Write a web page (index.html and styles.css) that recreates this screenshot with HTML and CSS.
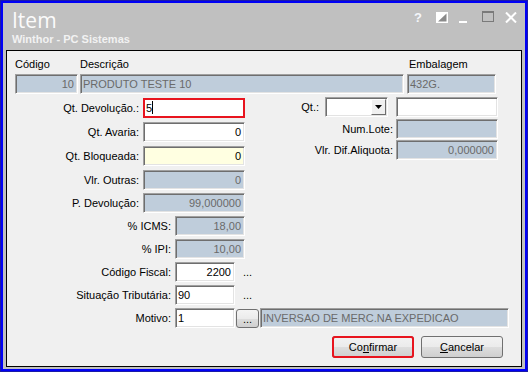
FILE: index.html
```html
<!DOCTYPE html>
<html lang="pt">
<head>
    <meta charset="UTF-8">
    <title>Item - Winthor</title>
    <link rel="stylesheet" href="styles.css">
</head>
<body>
    <div class="window">
        <div class="titlebar">
            <div class="title">
                <div class="title-main">Item</div>
                <div class="title-sub">Winthor - PC Sistemas</div>
            </div>
            <div class="ctrls">
                <span class="ctrl-help">?</span>
                <svg class="ctrl-skin" width="12" height="11" viewBox="0 0 12 11">
                    <rect x="0" y="0" width="12" height="11" fill="#ffffff"/>
                    <polygon points="10.5,1.5 10.5,9.5 2,9.5" fill="#8a8a8a"/>
                </svg>
                <svg class="ctrl-min" width="8" height="11" viewBox="0 0 8 11">
                    <rect x="0" y="9" width="8" height="2" fill="#ffffff"/>
                </svg>
                <svg class="ctrl-max" width="12" height="11" viewBox="0 0 12 11">
                    <rect x="0.5" y="0.5" width="11" height="10" fill="none" stroke="#7a7a7a"/>
                    <rect x="0" y="0" width="12" height="2" fill="#7a7a7a"/>
                </svg>
                <svg class="ctrl-close" width="12" height="11" viewBox="0 0 12 11">
                    <path d="M1 0.5 L11 10.5 M11 0.5 L1 10.5" stroke="#ffffff" stroke-width="2"/>
                </svg>
            </div>
        </div>

        <div class="panel">
            <!-- cabeçalho do produto -->
            <div class="top-grid">
                <span class="cap">Código</span>
                <span class="cap">Descrição</span>
                <span class="cap cap-emb">Embalagem</span>
                <div class="fld ro num">10</div>
                <div class="fld ro">PRODUTO TESTE 10</div>
                <div class="fld ro">432G.</div>
            </div>

            <div class="block-a">
                <div class="col-left">
                    <div class="row">
                        <label class="lbl lbl-a">Qt. Devolução.:</label>
                        <div class="fld w-a hl">5<span class="caret"></span></div>
                    </div>
                    <div class="row">
                        <label class="lbl lbl-a">Qt. Avaria:</label>
                        <div class="fld w-a num">0</div>
                    </div>
                    <div class="row">
                        <label class="lbl lbl-a">Qt. Bloqueada:</label>
                        <div class="fld w-a num yel">0</div>
                    </div>
                </div>
                <div class="col-right">
                    <div class="row">
                        <label class="lbl">Qt.:</label>
                        <div class="combo">
                            <span class="drop">
                                <svg width="7" height="4" viewBox="0 0 7 4"><polygon points="0,0 7,0 3.5,4" fill="#000"/></svg>
                            </span>
                        </div>
                        <div class="fld w-a"></div>
                    </div>
                    <div class="row row-lote">
                        <label class="lbl">Num.Lote:</label>
                        <div class="fld w-a ro"></div>
                    </div>
                    <div class="row row-dif">
                        <label class="lbl">Vlr. Dif.Aliquota:</label>
                        <div class="fld w-a ro num">0,000000</div>
                    </div>
                </div>
            </div>

            <div class="col-rest">
                <div class="row">
                    <label class="lbl lbl-a">Vlr. Outras:</label>
                    <div class="fld w-a ro num">0</div>
                </div>
                <div class="row">
                    <label class="lbl lbl-a">P. Devolução:</label>
                    <div class="fld w-a ro num">99,000000</div>
                </div>
                <div class="row">
                    <label class="lbl lbl-b">% ICMS:</label>
                    <div class="fld w-b ro num">18,00</div>
                </div>
                <div class="row">
                    <label class="lbl lbl-b">% IPI:</label>
                    <div class="fld w-b ro num">10,00</div>
                </div>
                <div class="row">
                    <label class="lbl lbl-b">Código Fiscal:</label>
                    <div class="fld w-c num">2200</div>
                    <span class="ell">...</span>
                </div>
                <div class="row">
                    <label class="lbl lbl-b">Situação Tributária:</label>
                    <div class="fld w-c">90</div>
                    <span class="ell">...</span>
                </div>
                <div class="row">
                    <label class="lbl lbl-b">Motivo:</label>
                    <div class="fld w-c">1</div>
                    <button class="dots-btn">...</button>
                    <div class="fld ro w-mot">INVERSAO DE MERC.NA EXPEDICAO</div>
                </div>
            </div>

            <div class="actions">
                <button class="btn btn-hl">Co<u>n</u>firmar</button>
                <button class="btn"><u>C</u>ancelar</button>
            </div>
        </div>
    </div>
</body>
</html>
```

FILE: styles.css
```css
* {
    margin: 0;
    padding: 0;
    box-sizing: border-box;
}

body {
    font-family: "Liberation Sans", Arial, sans-serif;
    font-size: 11px;
    color: #000;
    background: #fff;
}

.window {
    width: 528px;
    height: 372px;
    border: 3px solid #0000f6;
    outline: 1px solid #1a1aa8;
    outline-offset: -1px;
    background: #c0c0c0;
}

/* barra de titulo */
.titlebar {
    height: 47px;
    display: flex;
    justify-content: space-between;
}

.title {
    padding: 5px 0 0 9px;
    color: #fbfbfb;
}

.title-main {
    font-family: "Open Sans", sans-serif;
    font-size: 21px;
    line-height: 24px;
}

.title-sub {
    margin-top: 1px;
    font-weight: bold;
    font-size: 11px;
    line-height: 13px;
    color: #f2f2f2;
}

.ctrls {
    display: flex;
    align-items: flex-start;
    padding: 8px 8px 0 0;
}

.ctrl-help {
    width: 8px;
    font-weight: bold;
    font-size: 13px;
    line-height: 13px;
    color: #f4f6fa;
}

.ctrl-skin {
    margin: 1px 0 0 14px;
}

.ctrl-min {
    margin: 1px 0 0 11px;
}

.ctrl-max {
    margin: 0 0 0 15px;
}

.ctrl-close {
    margin: 1px 0 0 11px;
}

/* area do formulario */
.panel {
    margin: 0 3px 2px 3px;
    height: 317px;
    border: 1px solid #000;
    background: #f0f0f0;
    padding-top: 7px;
}

.top-grid {
    display: grid;
    grid-template-columns: 63px 324px 90px;
    grid-template-rows: 13px 20px;
    column-gap: 2px;
    row-gap: 3px;
    padding-left: 8px;
}

.top-grid > :nth-child(3n) {
    margin-left: 1px;
}

.cap {
    line-height: 13px;
}

.cap-emb {
    padding-left: 2px;
}

.fld {
    height: 20px;
    border: 1px solid;
    border-color: #a0a0a0 #ffffff #ffffff #a0a0a0;
    box-shadow: inset 1px 1px 0 #6e6e6e, inset -1px -1px 0 #e3e3e3;
    background: #fff;
    padding: 0 3px 0 2px;
    line-height: 18px;
    white-space: nowrap;
    overflow: hidden;
}

.ro {
    background: #bfcddb;
    color: #6a6a6a;
}

.yel {
    background: #ffffe1;
}

.num {
    text-align: right;
}

.hl {
    border: 2px solid #e8141e;
    box-shadow: none;
    line-height: 16px;
    padding-left: 1px;
}

.caret {
    display: inline-block;
    width: 1px;
    height: 13px;
    background: #000;
    vertical-align: -2px;
}

.w-a {
    width: 102px;
}

.w-b {
    width: 70px;
}

.w-c {
    width: 60px;
}

.w-mot {
    width: 249px;
    margin-left: 1px;
}

.row {
    display: flex;
    align-items: center;
    height: 20px;
}

.lbl {
    text-align: right;
    white-space: nowrap;
    margin-right: 4px;
}

.lbl-a {
    width: 132px;
}

.lbl-b {
    width: 164px;
}

.block-a {
    margin-top: 3px;
    display: flex;
    justify-content: space-between;
    padding-right: 23px;
}

.col-left {
    padding-top: 1px;
    display: flex;
    flex-direction: column;
    gap: 4px;
}

.col-right {
    display: flex;
    flex-direction: column;
    align-items: flex-end;
}

.col-right .lbl {
    margin-right: 3px;
}

.col-right .row:first-child .lbl {
    margin-right: 6px;
}

.row-lote {
    margin-top: 2px;
}

.row-dif {
    margin-top: 1px;
}

.combo {
    width: 63px;
    height: 20px;
    margin-right: 8px;
    border: 1px solid;
    border-color: #a0a0a0 #ffffff #ffffff #a0a0a0;
    box-shadow: inset 1px 1px 0 #6e6e6e, inset -1px -1px 0 #e3e3e3;
    background: #fff;
    display: flex;
    justify-content: flex-end;
    align-items: center;
    padding-right: 1px;
}

.drop {
    width: 15px;
    height: 16px;
    border: 1px solid;
    border-color: #ffffff #6e6e6e #6e6e6e #ffffff;
    background: #f0f0f0;
    display: flex;
    justify-content: center;
    align-items: center;
}

.col-rest {
    margin-top: 4px;
    display: flex;
    flex-direction: column;
    gap: 3px;
}

.ell {
    margin-left: 8px;
    line-height: 14px;
}

.dots-btn {
    width: 23px;
    height: 19px;
    margin-left: 1px;
    border: 1px solid #707070;
    border-radius: 3px;
    background: linear-gradient(#f4f4f4, #ebebeb 50%, #dddddd 51%, #d0d0d0);
    font-family: inherit;
    font-size: 11px;
    line-height: 14px;
    padding-top: 2px;
}

.actions {
    margin-top: 8px;
    padding-right: 18px;
    display: flex;
    justify-content: flex-end;
    gap: 7px;
}

.btn {
    width: 82px;
    height: 22px;
    border: 1px solid #707070;
    border-radius: 3px;
    background: linear-gradient(#f2f2f2, #ebebeb 50%, #dddddd 51%, #cfcfcf);
    font-family: inherit;
    font-size: 11px;
    color: #000;
}

.btn-hl {
    outline: 2px solid #e8141e;
    outline-offset: -2px;
}
```
